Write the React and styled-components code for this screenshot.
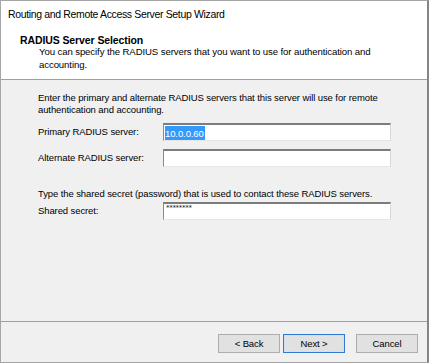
import React from 'react';
import styled, { createGlobalStyle } from 'styled-components';

const GlobalStyle = createGlobalStyle`
  html, body {
    margin: 0;
    padding: 0;
    background: #ffffff;
  }

  body {
    font-family: 'Liberation Sans', Arial, sans-serif;
    color: #000000;
  }
`;

const StyledWindow = styled.div`
  display: flex;
  flex-direction: column;
  box-sizing: border-box;
  width: 429px;
  height: 363px;
  border: 1px solid #a6a6a6;
  border-right: 2px solid #858585;
  background: #f0f0f0;
  overflow: hidden;
`;

const TitleBar = styled.div`
  display: flex;
  align-items: center;
  height: 25px;
  padding: 0 7px;
  background: #ffffff;
  font-size: 10.5px;
  letter-spacing: -0.35px;
  color: #000000;
`;

const StyledHeader = styled.header`
  height: 54px;
  box-sizing: border-box;
  padding: 8px 0 0 19px;
  background: #ffffff;
  border-bottom: 1px solid #a0a0a0;

  h1 {
    margin: 0;
    font-size: 10.5px;
    font-weight: bold;
    line-height: 12px;
    letter-spacing: -0.1px;
  }

  p {
    margin: 0;
    padding-left: 19px;
    width: 370px;
    font-size: 9.6px;
    letter-spacing: -0.1px;
    line-height: 12.5px;
  }
`;

const StyledBody = styled.main`
  flex: 1;
  padding: 12px 0 0 37px;
  font-size: 9.5px;
  letter-spacing: -0.1px;
  border-bottom: 1px solid #a0a0a0;

  p {
    margin: 0;
    line-height: 12px;
  }

  .intro {
    width: 345px;
    margin-bottom: 7px;
  }

  .secret-hint {
    margin: 21px 0 2px;
  }
`;

const FieldRow = styled.div`
  display: grid;
  grid-template-columns: 125px 228px;
  align-items: center;
  margin-bottom: ${({ gap }) => gap || 0}px;
`;

const Label = styled.label`
  font-size: 9.5px;
  line-height: 12px;
`;

const TextBox = styled.div`
  display: flex;
  align-items: ${({ masked }) => (masked ? 'flex-start' : 'center')};
  box-sizing: border-box;
  height: 18px;
  padding: 0 2px 0 1px;
  background: #ffffff;
  border-style: solid;
  border-width: 2px 1px 1px 1px;
  border-color: #7c7c7c #d9d9d9 #e6e6e6 #8a8a8a;
  font-size: 9.5px;
  letter-spacing: -0.1px;
  overflow: hidden;
`;

const Selected = styled.span`
  padding: 1px 1px 0 0;
  line-height: 13px;
  background: #3399ff;
  color: #ffffff;
`;

const Mask = styled.span`
  padding-left: 1px;
  font-family: 'DejaVu Sans', sans-serif;
  font-size: 7px;
  line-height: 8px;
  letter-spacing: -0.3px;
  color: #222222;
`;

const StyledFooter = styled.footer`
  display: flex;
  justify-content: flex-end;
  align-items: flex-start;
  height: 40px;
  box-sizing: border-box;
  padding: 12px 9px 0 0;
  gap: 3px;

  .cancel {
    margin-left: 8px;
  }
`;

const Button = styled.button`
  width: 62px;
  height: 19px;
  box-sizing: border-box;
  padding: 0;
  background: #e1e1e1;
  border: 1px solid ${({ primary }) => (primary ? '#2f7ad1' : '#adadad')};
  box-shadow: ${({ primary }) => (primary ? 'inset 0 0 0 1px #cfe1f5' : 'none')};
  font-family: 'Liberation Sans', Arial, sans-serif;
  font-size: 9.5px;
  letter-spacing: -0.1px;
  color: #000000;
`;

const App = () => {
  return (
    <>
      <GlobalStyle />
      <StyledWindow>
        <TitleBar>Routing and Remote Access Server Setup Wizard</TitleBar>

        <StyledHeader>
          <h1>RADIUS Server Selection</h1>
          <p>
            You can specify the RADIUS servers that you want to use for authentication and
            accounting.
          </p>
        </StyledHeader>

        <StyledBody>
          <p className="intro">
            Enter the primary and alternate RADIUS servers that this server will use for remote
            authentication and accounting.
          </p>

          <FieldRow gap={8}>
            <Label>Primary RADIUS server:</Label>
            <TextBox>
              <Selected>10.0.0.60</Selected>
            </TextBox>
          </FieldRow>

          <FieldRow>
            <Label>Alternate RADIUS server:</Label>
            <TextBox />
          </FieldRow>

          <p className="secret-hint">
            Type the shared secret (password) that is used to contact these RADIUS servers.
          </p>

          <FieldRow>
            <Label>Shared secret:</Label>
            <TextBox masked>
              <Mask>********</Mask>
            </TextBox>
          </FieldRow>
        </StyledBody>

        <StyledFooter>
          <Button>&lt; Back</Button>
          <Button primary>Next &gt;</Button>
          <Button className="cancel">Cancel</Button>
        </StyledFooter>
      </StyledWindow>
    </>
  );
};

export default App;
